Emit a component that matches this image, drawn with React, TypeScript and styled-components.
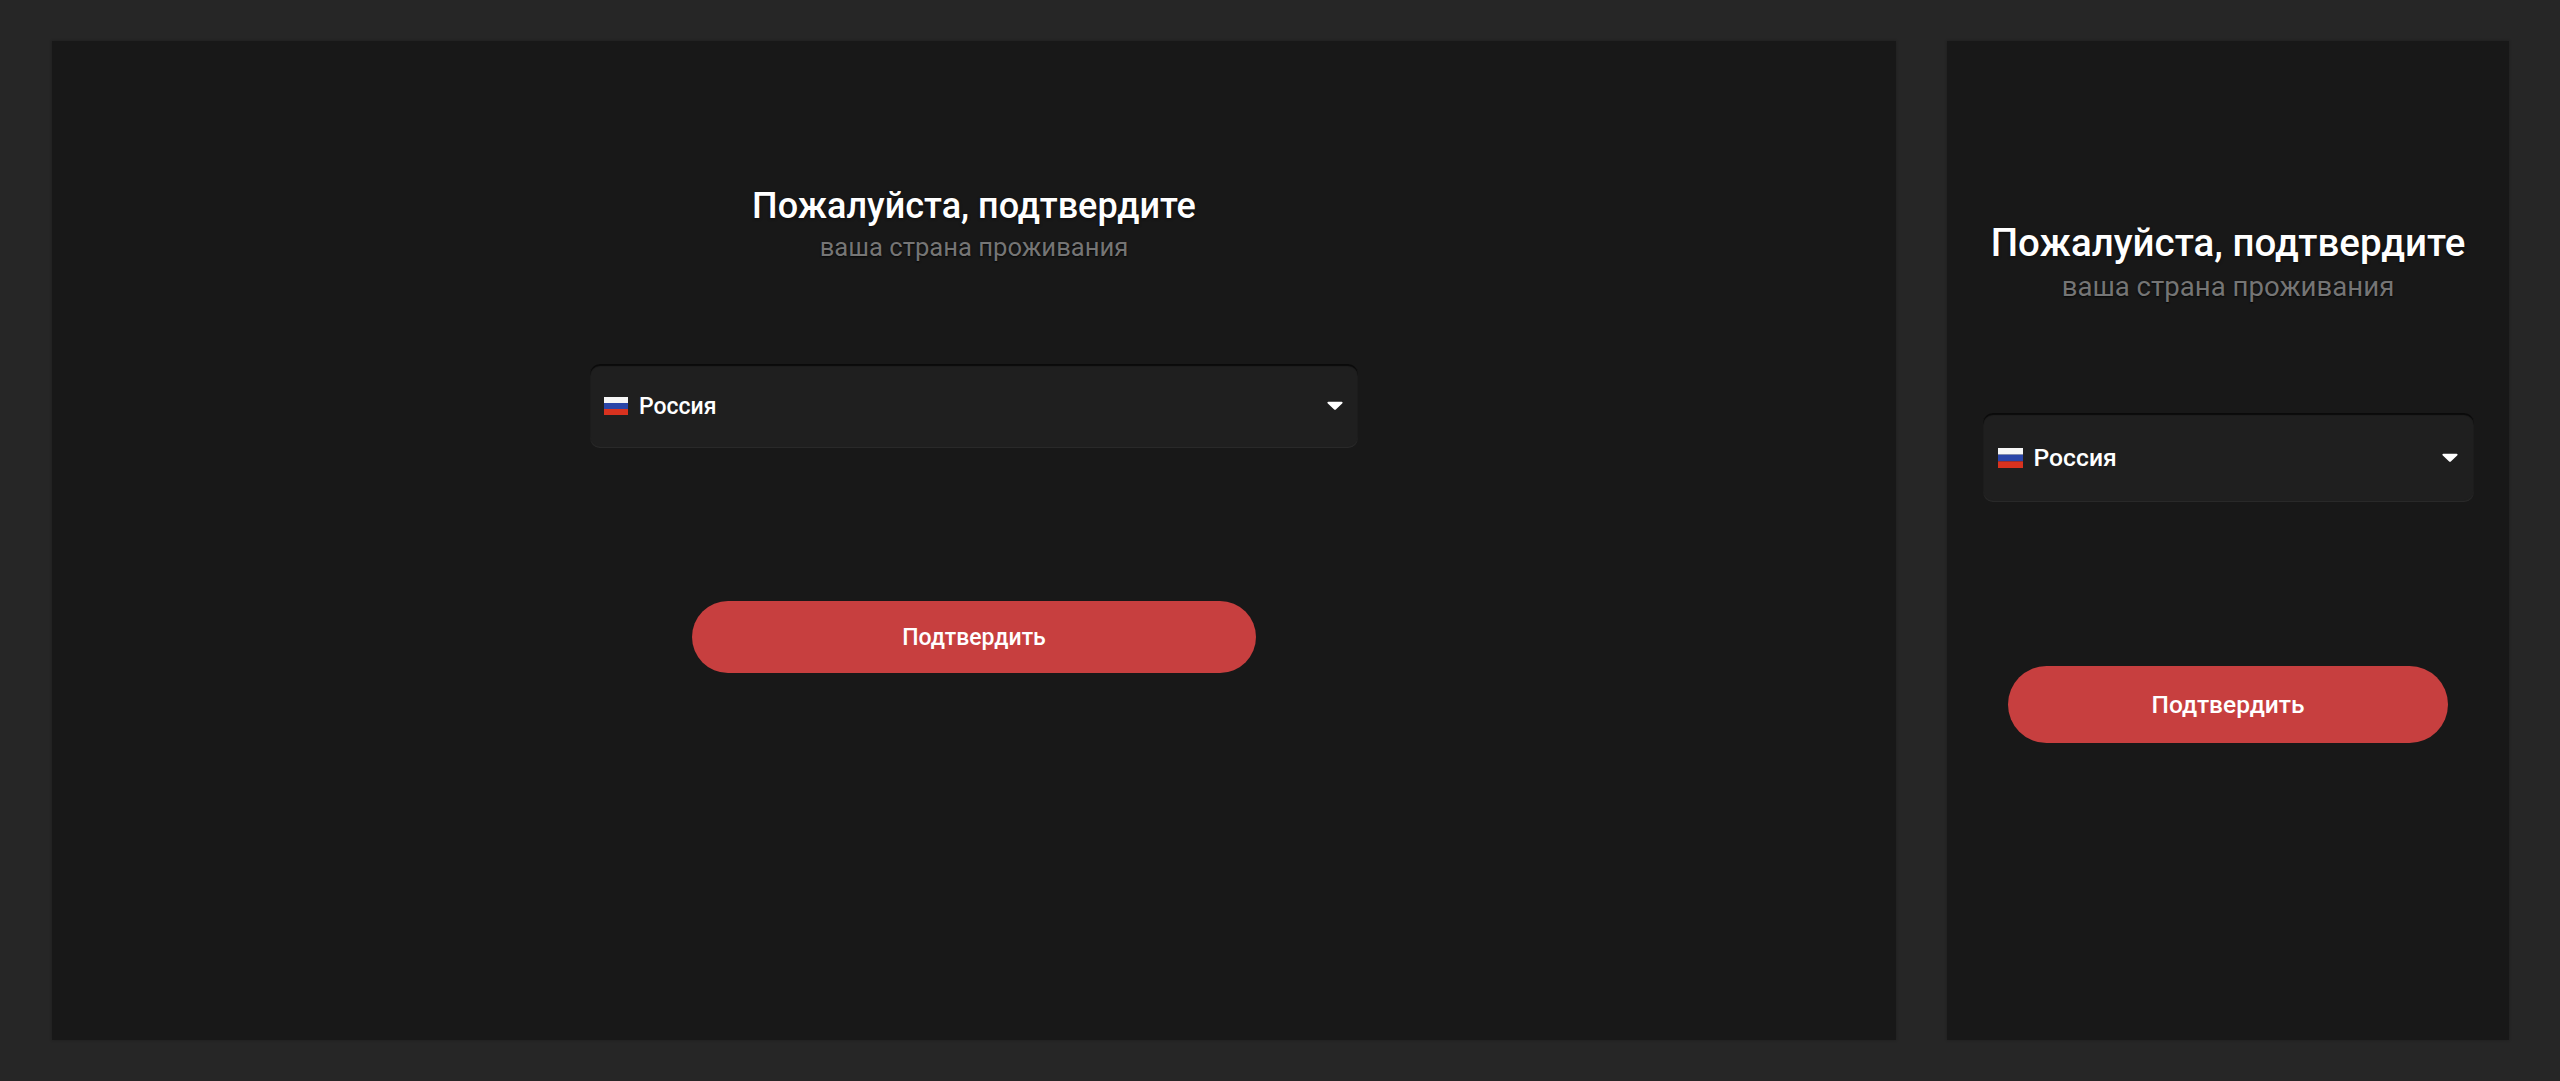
import React from 'react';
import styled, { createGlobalStyle } from 'styled-components';

interface Sizing {
  width: number;
  top: number;
  title: number;
  titleLine: number;
  subtitle: number;
  subtitleLine: number;
  subtitleGap: number;
  selectGap: number;
  selectWidth: number;
  selectHeight: number;
  selectPad: number;
  flagWidth: number;
  flagHeight: number;
  flagGap: number;
  label: number;
  arrow: number;
  buttonGap: number;
  buttonWidth: number;
  buttonHeight: number;
  buttonLabel: number;
}

const wide: Sizing = {
  width: 1844,
  top: 145,
  title: 36,
  titleLine: 41,
  subtitle: 25.6,
  subtitleLine: 29,
  subtitleGap: 6,
  selectGap: 102,
  selectWidth: 768,
  selectHeight: 84,
  selectPad: 14,
  flagWidth: 24,
  flagHeight: 18,
  flagGap: 11,
  label: 23,
  arrow: 16,
  buttonGap: 153,
  buttonWidth: 564,
  buttonHeight: 72,
  buttonLabel: 23,
};

const narrow: Sizing = {
  width: 562,
  top: 180,
  title: 38.5,
  titleLine: 44,
  subtitle: 27.6,
  subtitleLine: 31,
  subtitleGap: 6,
  selectGap: 111,
  selectWidth: 491,
  selectHeight: 89,
  selectPad: 15,
  flagWidth: 25,
  flagHeight: 20,
  flagGap: 11,
  label: 24.7,
  arrow: 16,
  buttonGap: 164,
  buttonWidth: 440,
  buttonHeight: 77,
  buttonLabel: 24.5,
};

const GlobalStyle = createGlobalStyle`
  html,
  body {
    margin: 0;
    padding: 0;
    background: #262626;
    font-family: Roboto, 'Liberation Sans', sans-serif;
  }
`;

const Page = styled.div`
  display: flex;
  gap: 51px;
  width: 2560px;
  height: 1081px;
  padding: 41px 51px 41px 52px;
  box-sizing: border-box;
  overflow: hidden;
`;

const Panel = styled.section<{ $s: Sizing }>`
  display: flex;
  flex-direction: column;
  align-items: center;
  width: ${({ $s }) => $s.width}px;
  padding-top: ${({ $s }) => $s.top}px;
  box-sizing: border-box;
  background: #181818;
  box-shadow: 0 0 3px rgba(0, 0, 0, 0.25);
`;

const Title = styled.h1<{ $s: Sizing }>`
  margin: 0;
  color: #ffffff;
  font-size: ${({ $s }) => $s.title}px;
  line-height: ${({ $s }) => $s.titleLine}px;
  font-weight: 500;
  white-space: nowrap;
  text-shadow: 0 1px 3px rgba(0, 0, 0, 0.5);
`;

const Subtitle = styled.p<{ $s: Sizing }>`
  margin: ${({ $s }) => $s.subtitleGap}px 0 0;
  color: #757575;
  font-size: ${({ $s }) => $s.subtitle}px;
  line-height: ${({ $s }) => $s.subtitleLine}px;
  font-weight: 400;
  white-space: nowrap;
  text-shadow: 0 1px 2px rgba(0, 0, 0, 0.8);
`;

const Select = styled.div<{ $s: Sizing }>`
  display: flex;
  align-items: center;
  margin-top: ${({ $s }) => $s.selectGap}px;
  width: ${({ $s }) => $s.selectWidth}px;
  height: ${({ $s }) => $s.selectHeight}px;
  padding: 0 ${({ $s }) => $s.selectPad + 1}px 0 ${({ $s }) => $s.selectPad}px;
  box-sizing: border-box;
  background: #1f1f1f;
  border-radius: 10px;
  box-shadow:
    inset 0 2px 1px #0a0a0a,
    inset 0 -1px 1px #2b2b2b;
`;

const Flag = styled.svg<{ $s: Sizing }>`
  flex: none;
  width: ${({ $s }) => $s.flagWidth}px;
  height: ${({ $s }) => $s.flagHeight}px;
  margin-right: ${({ $s }) => $s.flagGap}px;
`;

const Country = styled.span<{ $s: Sizing }>`
  flex: 1;
  color: #ffffff;
  font-size: ${({ $s }) => $s.label}px;
  font-weight: 500;
`;

const Arrow = styled.svg<{ $s: Sizing }>`
  flex: none;
  width: ${({ $s }) => $s.arrow}px;
  height: ${({ $s }) => $s.arrow * 0.7}px;
`;

const Button = styled.button<{ $s: Sizing }>`
  margin-top: ${({ $s }) => $s.buttonGap}px;
  width: ${({ $s }) => $s.buttonWidth}px;
  height: ${({ $s }) => $s.buttonHeight}px;
  border: 0;
  border-radius: 40px;
  background: #c73f3f;
  color: #ffffff;
  font-family: inherit;
  font-size: ${({ $s }) => $s.buttonLabel}px;
  font-weight: 500;
`;

const CountryForm: React.FC<{ sizing: Sizing }> = ({ sizing }) => (
  <Panel $s={sizing}>
    <Title $s={sizing}>Пожалуйста, подтвердите</Title>
    <Subtitle $s={sizing}>ваша страна проживания</Subtitle>
    <Select $s={sizing}>
      <Flag $s={sizing} viewBox="0 0 24 18" preserveAspectRatio="none">
        <rect width="24" height="6" fill="#f6f6f6" />
        <rect y="6" width="24" height="6" fill="#2a45a8" />
        <rect y="12" width="24" height="6" fill="#d8321f" />
      </Flag>
      <Country $s={sizing}>Россия</Country>
      <Arrow $s={sizing} viewBox="0 0 14 10">
        <path d="M1.2 1.5c-1-.1-1.300.9-.6 1.600L6 8.300c.6.600 1.400.600 2 0l5.400-5.200c.7-.7.4-1.700-.6-1.600z" fill="#ffffff" />
      </Arrow>
    </Select>
    <Button $s={sizing}>Подтвердить</Button>
  </Panel>
);

const App: React.FC = () => (
  <Page>
    <GlobalStyle />
    <CountryForm sizing={wide} />
    <CountryForm sizing={narrow} />
  </Page>
);

export default App;
